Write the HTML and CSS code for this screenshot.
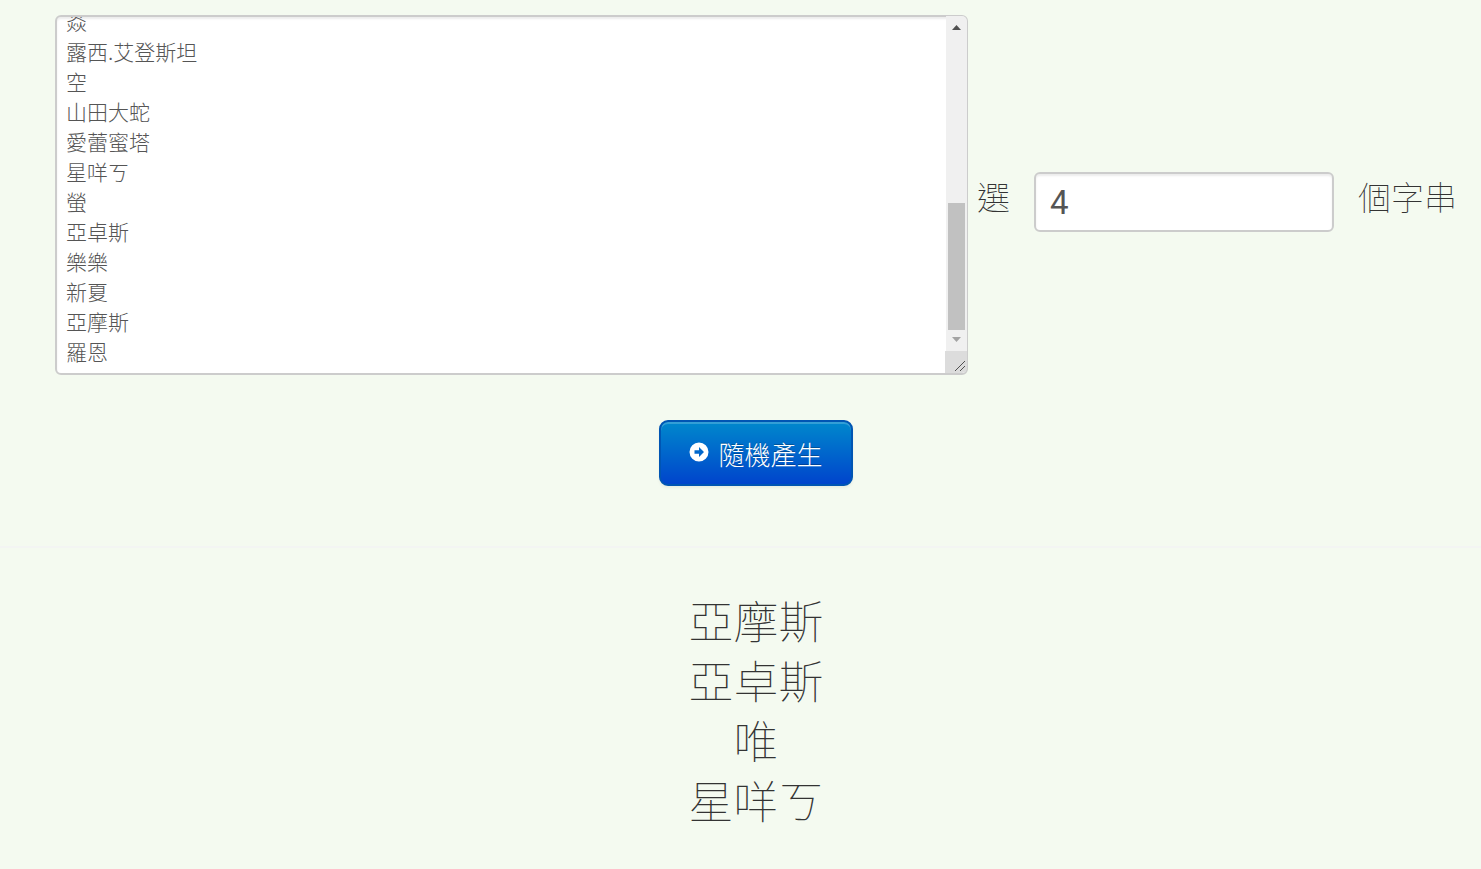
FILE: index.html
```
<!DOCTYPE html>
<html lang="zh-Hant">
<head>
    <meta charset="UTF-8">
    <meta name="viewport" content="width=device-width, initial-scale=1.0">
    <title>隨機產生</title>
    <link rel="stylesheet" href="styles.css">
</head>
<body>
    <form class="picker" onsubmit="return false">
        <div class="input-row">
            <div class="strings-box">
                <textarea id="strings" class="strings" aria-label="字串" onscroll="updateScrollbar()" oninput="updateScrollbar()">唯














焱
露西.艾登斯坦
空
山田大蛇
愛蕾蜜塔
星咩ㄎ
螢
亞卓斯
樂樂
新夏
亞摩斯
羅恩</textarea>
                <div class="scrollbar" aria-hidden="true">
                    <svg class="arrow" viewBox="0 0 21 21"><path fill="#505050" d="M6 14h9l-4.5-5z"/></svg>
                    <div id="track" class="track">
                        <div id="thumb" class="thumb"></div>
                    </div>
                    <svg class="arrow" viewBox="0 0 21 21"><path fill="#a3a3a3" d="M6 7h9l-4.5 5z"/></svg>
                    <svg class="resizer" viewBox="0 0 22 22"><path stroke="#505050" d="M10 20L20 10M15 20l5-5"/></svg>
                </div>
            </div>
            <label for="count">選</label>
            <input type="text" id="count" class="count" value="4">
            <label for="count">個字串</label>
        </div>
        <button type="button" class="btn-primary" onclick="pickStrings()">
            <svg class="icon" viewBox="0 0 20 20" aria-hidden="true">
                <path fill="#fff" fill-rule="evenodd" d="M10 0.5a9.5 9.5 0 1 0 0 19a9.5 9.5 0 1 0 0-19zM5.5 8.3h4.5V5l5 5l-5 5v-3.3H5.5z"/>
            </svg>
            隨機產生
        </button>
    </form>
    <hr>
    <div id="results" class="results">亞摩斯<br>亞卓斯<br>唯<br>星咩ㄎ</div>
    <script>
const strings = document.getElementById('strings');

function updateScrollbar() {
    const trackHeight = document.getElementById('track').clientHeight;
    const thumb = document.getElementById('thumb');
    const ratio = trackHeight / strings.scrollHeight;
    thumb.style.height = Math.round(strings.clientHeight * ratio) + 'px';
    thumb.style.marginTop = Math.round(strings.scrollTop * ratio) + 'px';
}

function pickStrings() {
    const count = parseInt(document.getElementById('count').value) || 0;
    const pool = strings.value.split('\n').filter(s => s.trim() !== '');
    const results = document.getElementById('results');
    results.textContent = '';

    for (let i = 0; i < count && pool.length > 0; i++) {
        const index = Math.floor(Math.random() * pool.length);
        results.append(pool.splice(index, 1)[0], document.createElement('br'));
    }
}

strings.scrollTop = strings.scrollHeight;
updateScrollbar();
    </script>
</body>
</html>
```
FILE: styles.css
```
body {
    margin: 0;
    background-color: #f4faf0;
    color: #333;
    font-family: "Noto Sans CJK TC", sans-serif;
    font-weight: 100;
}

.picker {
    display: flex;
    flex-direction: column;
    align-items: center;
    padding: 15px 24px 0 55px;
}

.input-row {
    display: flex;
    align-items: center;
    width: 100%;
}

label {
    flex: none;
    font-size: 33px;
    line-height: 60px;
    padding-bottom: 12px;
}

.strings, .count {
    box-sizing: border-box;
    border: 2px solid #ccc;
    border-radius: 6px;
    background-color: #fff;
    color: #555;
    box-shadow: inset 0 2px 2px rgba(0, 0, 0, 0.075);
}

.strings-box {
    position: relative;
    flex: 1;
    min-width: 0;
    margin: 0 9px 14px 0;
}

.strings {
    display: block;
    width: 100%;
    height: 360px;
    padding: 6px 30px 7px 9px;
    font-family: inherit;
    font-size: 21px;
    font-weight: 300;
    line-height: 30px;
    overflow-y: scroll;
    scrollbar-width: none;
    resize: none;
}

/* scrollbar drawn over the right edge of the textarea */
.scrollbar {
    position: absolute;
    top: 1px;
    right: 1px;
    bottom: 2px;
    display: flex;
    flex-direction: column;
    align-items: flex-end;
    width: 22px;
    border-radius: 0 5px 5px 0;
    overflow: hidden;
    pointer-events: none;
}

.arrow {
    flex: none;
    width: 21px;
    height: 21px;
    background-color: #f0f0f0;
}

.track {
    display: flow-root;
    flex: 1;
    width: 21px;
    background-color: #f0f0f0;
}

.thumb {
    margin: 0 2px;
    background-color: #c1c1c1;
}

.resizer {
    flex: none;
    width: 22px;
    height: 22px;
    background-color: #dcdcdc;
}

.count {
    flex: none;
    width: 300px;
    height: 60px;
    margin: 0 24px;
    padding: 6px 14px;
    font-family: Roboto, sans-serif;
    font-size: 33px;
    font-weight: 400;
}

.btn-primary {
    display: flex;
    align-items: center;
    gap: 9px;
    height: 66px;
    margin-top: 31px;
    padding: 0 28px;
    border: 2px solid #0055b3;
    border-radius: 9px;
    background-image: linear-gradient(#0088cc, #0044cc);
    box-shadow: inset 0 2px 0 rgba(255, 255, 255, 0.2), 0 2px 3px rgba(0, 0, 0, 0.05);
    color: #fff;
    font-family: inherit;
    font-size: 26px;
    font-weight: 300;
    text-shadow: 0 -1px 0 rgba(0, 0, 0, 0.25);
    cursor: pointer;
}

.icon {
    width: 20px;
    height: 20px;
    margin-bottom: 3px;
}

hr {
    margin: 60px 0 42px;
    border: 0;
    border-top: 2px solid #f3f5f3;
}

.results {
    padding: 0 24px 40px 55px;
    font-size: 45px;
    line-height: 60px;
    text-align: center;
}
```
